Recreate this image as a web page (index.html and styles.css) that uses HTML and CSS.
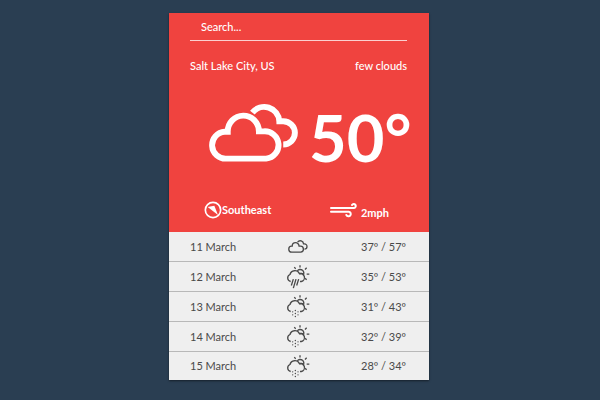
FILE: index.html
```html
<!DOCTYPE html>
<html lang="en">
<head>
<meta charset="utf-8">
<meta name="viewport" content="width=device-width, initial-scale=1">
<title>Weather</title>
<link rel="stylesheet" href="styles.css">
</head>
<body>
<svg class="sprite" aria-hidden="true">
  <defs>
    <symbol id="clouds" viewBox="24 26 274 180">
      <path d="M77 194A41 41 0 0 1 72 112H81A47 48 0 0 1 176 111H190A41 41 0 0 1 198 194Z"/>
      <path d="M156 54A46 46 0 0 1 238 80H250A35 35 0 0 1 250 151"/>
    </symbol>
    <symbol id="sun-cloud" viewBox="20 84 72 74">
      <path d="M34 136A11 11 0 0 1 32 115A15 15 0 0 1 60 112A12 12 0 0 1 66 136H62"/>
      <path d="M54 104A10 10 0 1 1 71 118"/>
      <path d="M60 114Q66 110 73 114"/>
      <path d="M62 87V94M45 93L49 98M82 95L77 100M82 114H90M77 126L82 131"/>
    </symbol>
    <symbol id="rain" viewBox="20 84 72 74">
      <use href="#sun-cloud" x="20" y="84" width="72" height="74"/>
      <path d="M42 129L36 148M50 129L42 156M58 129L52 148"/>
    </symbol>
    <symbol id="snow" viewBox="20 84 72 74">
      <use href="#sun-cloud" x="20" y="84" width="72" height="74"/>
      <path class="flakes" d="M40 137h.1M48 133h.1M56 137h.1M40 146h.1M48 142h.1M56 146h.1M48 151h.1"/>
    </symbol>
  </defs>
</svg>
<main class="card">
  <section class="current">
    <input class="search" type="text" placeholder="Search..." aria-label="Search">
    <div class="split">
      <span>Salt Lake City, US</span>
      <span>few clouds</span>
    </div>
    <div class="now">
      <svg class="now-icon" aria-hidden="true"><use href="#clouds"/></svg>
      <span class="degrees">50°</span>
    </div>
    <div class="wind">
      <span class="wind-item">
        <svg class="compass" viewBox="0 0 54 54" aria-hidden="true">
          <circle cx="27" cy="27" r="23"/>
          <path d="M11 18L31 14L42 42Z"/>
        </svg>
        <span>Southeast</span>
      </span>
      <span class="wind-item">
        <svg class="breeze" viewBox="0 0 84 45" aria-hidden="true">
          <path d="M3 15H72A6 6 0 1 0 66 6"/>
          <path d="M3 26H56A7 7 0 1 1 49 36"/>
        </svg>
        <span class="speed">2mph</span>
      </span>
    </div>
  </section>
  <ul class="forecast">
    <li class="day"><span>11 March</span><svg class="day-icon small" aria-hidden="true"><use href="#clouds"/></svg><span class="range">37º / 57º</span></li>
    <li class="day"><span>12 March</span><svg class="day-icon" aria-hidden="true"><use href="#rain"/></svg><span class="range">35º / 53º</span></li>
    <li class="day"><span>13 March</span><svg class="day-icon" aria-hidden="true"><use href="#snow"/></svg><span class="range">31º / 43º</span></li>
    <li class="day"><span>14 March</span><svg class="day-icon" aria-hidden="true"><use href="#snow"/></svg><span class="range">32º / 39º</span></li>
    <li class="day"><span>15 March</span><svg class="day-icon" aria-hidden="true"><use href="#snow"/></svg><span class="range">28º / 34º</span></li>
  </ul>
</main>
</body>
</html>
```

FILE: styles.css
```css
* {
  box-sizing: border-box;
}

body {
  margin: 0;
  padding: 13px 18px 20px 16px;
  min-height: 100vh;
  background: #2a3e52;
  color: #4a4a4a;
  font: 11px/16px Lato, "Liberation Sans", sans-serif;
}

svg {
  display: block;
  flex: none;
  fill: none;
  stroke: currentColor;
}

.sprite {
  position: absolute;
  width: 0;
  height: 0;
}

.card {
  max-width: 260px;
  margin: 0 auto;
  background: #efefef;
  box-shadow: 0 1px 2px rgba(0, 0, 0, 0.5);
}

.current {
  padding: 0 22px 11px 21px;
  background: #f0433f;
  color: #fff;
  font-weight: 500;
}

.search {
  display: block;
  width: 100%;
  height: 28px;
  padding: 0 11px;
  border: 0;
  border-bottom: 1px solid #fbd0cf;
  border-radius: 0;
  background: transparent;
  color: inherit;
  font: inherit;
}

.search::placeholder {
  color: inherit;
  opacity: 1;
}

.split {
  display: flex;
  justify-content: space-between;
  padding-top: 17px;
}

.now {
  display: flex;
  align-items: center;
  gap: 10px;
  padding: 23px 0 22px 19px;
}

.now-icon {
  width: 90px;
  height: 60px;
  margin-bottom: 8px;
  stroke-width: 18;
}

.degrees {
  font-size: 65px;
  font-weight: 700;
  line-height: 80px;
}

.wind {
  display: flex;
  justify-content: space-between;
  padding: 0 18px 0 14px;
}

.wind-item {
  display: flex;
  align-items: center;
  font-weight: 700;
}

.compass {
  width: 18px;
  height: 18px;
  stroke-width: 5;
}

.compass path {
  fill: currentColor;
  stroke: none;
}

.breeze {
  width: 28px;
  height: 15px;
  margin-right: 3px;
  stroke-width: 6;
  stroke-linecap: round;
}

.speed {
  padding-top: 6px;
}

.forecast {
  margin: 0;
  padding: 0;
  list-style: none;
}

.day {
  display: grid;
  grid-template-columns: 1fr 24px 1fr;
  align-items: center;
  height: 30px;
  padding: 0 23px 0 21px;
  border-bottom: 1px solid #b8b8b8;
}

.day:last-child {
  height: 28px;
  border-bottom: 0;
}

.day-icon {
  width: 24px;
  height: 25px;
  stroke-width: 4;
}

.day-icon.small {
  justify-self: center;
  width: 20px;
  height: 13px;
  stroke-width: 18;
}

.flakes {
  stroke-linecap: round;
}

.range {
  text-align: right;
}
```
